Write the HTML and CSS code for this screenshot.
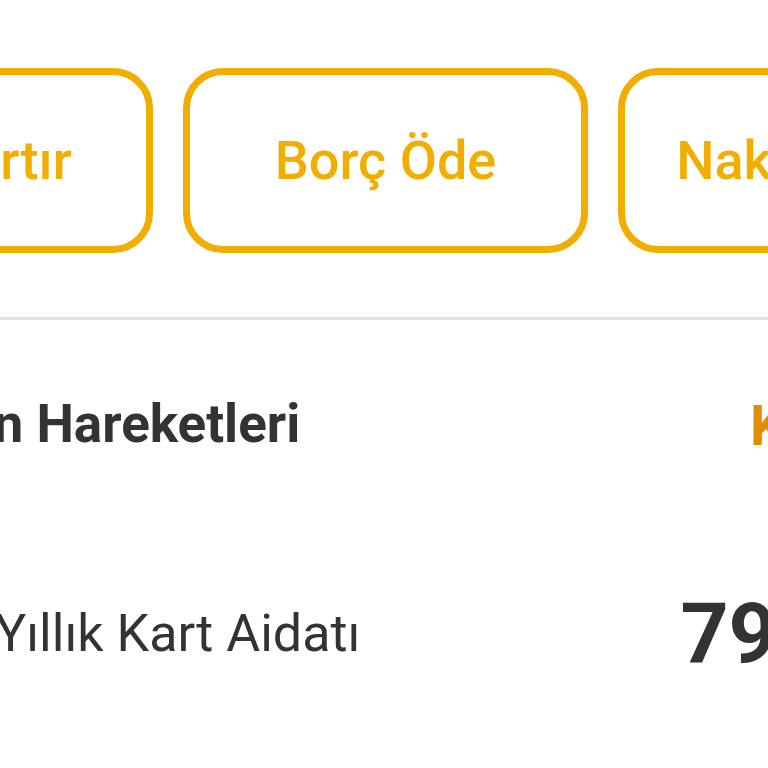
FILE: index.html
```html
<!DOCTYPE html>
<html lang="tr">
<head>
    <meta charset="UTF-8">
    <meta name="viewport" content="width=device-width, initial-scale=1.0">
    <title>Kart Detayı</title>
    <link rel="stylesheet" href="styles.css">
</head>
<body>
    <div class="screen">
        <div class="actions">
            <button class="action">Limit Artır</button>
            <button class="action">Borç Öde</button>
            <button class="action">Nakit Avans</button>
        </div>
        <div class="divider"></div>
        <div class="section-head">
            <span class="section-title">Son Hareketleri</span>
            <a class="section-link">Kapat</a>
        </div>
        <div class="tx-row">
            <span class="tx-name">Yıllık Kart Aidatı</span>
            <span class="tx-amount">79,00 TL</span>
        </div>
    </div>
</body>
</html>
```

FILE: styles.css
```css
body {
    margin: 0;
    background: #ffffff;
    font-family: Roboto, "Noto Sans", sans-serif;
    color: #333333;
    overflow: hidden;
}

.screen {
    width: 1368px;
    margin-left: -300px;
}

.actions {
    display: flex;
    gap: 30px;
    margin-top: 68px;
    padding-left: 48px;
}

.action {
    flex: 0 0 405px;
    height: 185px;
    border: 7px solid #f2ae00;
    border-radius: 40px;
    background: #ffffff;
    color: #f2ae00;
    font-family: Roboto, sans-serif;
    font-size: 54px;
    font-weight: 500;
}

.divider {
    height: 3px;
    margin-top: 64px;
    background: #e2e2e2;
}

.section-head {
    display: flex;
    justify-content: space-between;
    margin-top: 78px;
    padding: 0 172px 0 231px;
    line-height: 1;
}

.section-title {
    font-size: 53px;
    font-weight: 700;
}

.section-link {
    font-size: 56px;
    font-weight: 700;
    color: #e38b00;
}

.tx-row {
    display: flex;
    justify-content: space-between;
    align-items: center;
    margin-top: 138px;
    padding: 0 58px 0 295px;
    line-height: 1;
}

.tx-name {
    font-size: 52px;
}

.tx-amount {
    font-size: 84px;
    font-weight: 700;
}
```
